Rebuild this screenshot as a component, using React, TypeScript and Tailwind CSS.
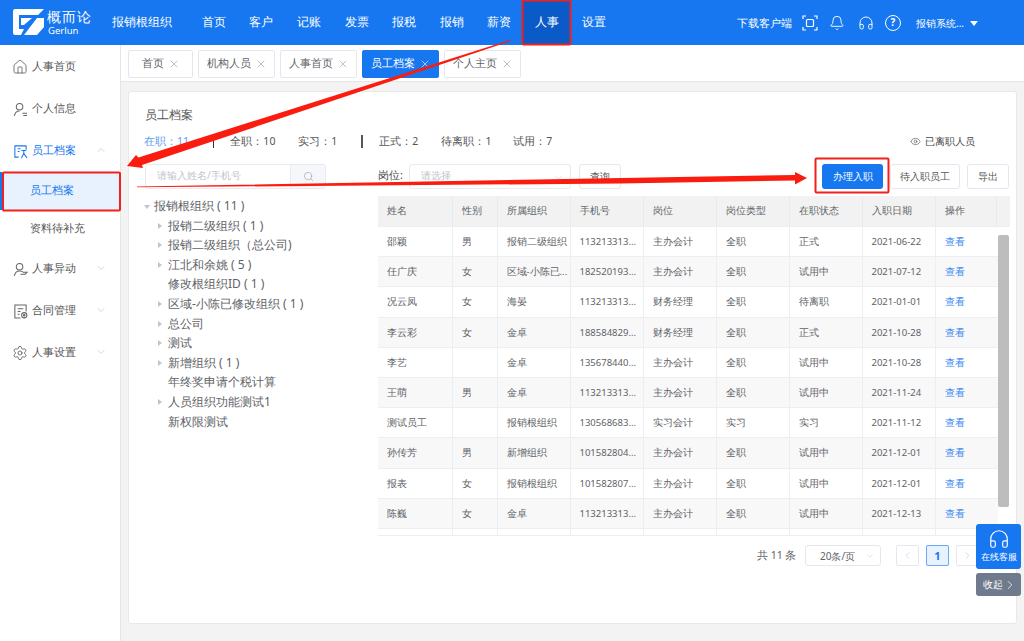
import React from "react";
import { Bell, ChevronDown, ChevronLeft, ChevronRight, ChevronUp, Eye, Headphones, Home, Search, Settings, X } from "lucide-react";

const nav: [string, number][] = [["首页", 214], ["客户", 261], ["记账", 309], ["发票", 357], ["报税", 404], ["报销", 452], ["薪资", 499], ["人事", 547], ["设置", 594]];
const tabs: [string, number, number][] = [["首页", 128, 65], ["机构人员", 198, 77], ["人事首页", 280, 77], ["员工档案", 362, 77], ["个人主页", 444, 77]];
const cols = [75, 45, 73, 73, 73, 73, 73, 73, 61];
const heads = ["姓名", "性别", "所属组织", "手机号", "岗位", "岗位类型", "在职状态", "入职日期", "操作"];
const rows = [
  ["邵颖", "男", "报销二级组织", "113213313...", "主办会计", "全职", "正式", "2021-06-22"],
  ["任广庆", "女", "区域-小陈已...", "182520193...", "主办会计", "全职", "试用中", "2021-07-12"],
  ["况云凤", "女", "海晏", "113213313...", "财务经理", "全职", "待离职", "2021-01-01"],
  ["李云彩", "女", "金卓", "188584829...", "财务经理", "全职", "正式", "2021-10-28"],
  ["李艺", "", "金卓", "135678440...", "主办会计", "全职", "试用中", "2021-10-28"],
  ["王萌", "男", "金卓", "113213313...", "主办会计", "全职", "试用中", "2021-11-24"],
  ["测试员工", "", "报销根组织", "130568683...", "实习会计", "实习", "实习", "2021-11-12"],
  ["孙传芳", "男", "新增组织", "101582804...", "主办会计", "全职", "试用中", "2021-12-01"],
  ["报表", "女", "报销根组织", "101582807...", "主办会计", "全职", "试用中", "2021-12-01"],
  ["陈巍", "女", "金卓", "113213313...", "主办会计", "全职", "试用中", "2021-12-13"],
  ["", "", "", "", "", "", "", ""],
];
const tree: [string, boolean][] = [["报销二级组织 ( 1 )", true], ["报销二级组织（总公司)", true], ["江北和余姚 ( 5 )", true], ["修改根组织ID ( 1 )", false], ["区域-小陈已修改组织 ( 1 )", true], ["总公司", true], ["测试", true], ["新增组织 ( 1 )", true], ["年终奖申请个税计算", false], ["人员组织功能测试1", true], ["新权限测试", false]];
const stats: [string, number][] = [["全职：10", 230], ["实习：1", 298], ["正式：2", 379], ["待离职：1", 441], ["试用：7", 513]];

function Tri() {
  return <span className="absolute left-[-10px] top-[7px] w-0 h-0 border-y-[3px] border-y-transparent border-l-[4px] border-l-[#c0c4cc]" />;
}

function SideItem({ y, label, icon, blue, chev }: { y: number; label: string; icon: React.ReactNode; blue?: boolean; chev?: "up" | "down" }) {
  return (
    <div className={`absolute left-0 w-[120px] h-[20px] flex items-center text-[10.5px] ${blue ? "text-[#1677f0]" : "text-[#555]"}`} style={{ top: y }}>
      <span className="absolute left-[11px] top-[1px] w-[18px] h-[18px] flex items-center justify-center">{icon}</span>
      <span className="absolute left-[32px]">{label}</span>
      {chev === "up" && <ChevronUp className="absolute left-[95px] top-[3px] text-[#b8bcc4]" size={12} strokeWidth={1.2} />}
      {chev === "down" && <ChevronDown className="absolute left-[95px] top-[3px] text-[#b8bcc4]" size={12} strokeWidth={1.2} />}
    </div>
  );
}

export default function App() {
  return (
    <div className="relative w-[1024px] h-[641px] overflow-hidden bg-[#f3f3f3] text-[#606266] font-['Noto_Sans_CJK_SC','Noto_Sans',sans-serif]">
      {/* Header */}
      <header className="absolute inset-x-0 top-0 h-[45px] bg-[#1677f0] text-white">
        <svg className="absolute left-[13px] top-[9px]" width="31" height="26" viewBox="0 0 31 26" fill="#fff">
          <path d="M2 0H31L25 6H6V20H11L8 26H2Q0 26 0 24V2Q0 0 2 0Z" />
          <path d="M8 9H19L11 16H8Z" />
          <path d="M24 9H31V18L24 26H11Z" />
        </svg>
        <span className="absolute left-[47px] top-[8px] text-[14px] leading-[18px] font-light tracking-[1px]">概而论</span>
        <span className="absolute left-[48px] top-[25px] text-[9.5px] leading-[12px]">Gerlun</span>
        <span className="absolute left-[112px] top-[13px] text-[12px] leading-[18px]">报销根组织</span>
        <div className="absolute left-[522px] top-0 w-[49px] h-[45px] bg-[#0a5bc8]" />
        {nav.map(([t, x]) => (
          <span key={t} className="absolute top-[13px] text-[12px] leading-[18px] -translate-x-1/2" style={{ left: x }}>{t}</span>
        ))}
        <span className="absolute left-[737px] top-[15px] text-[10.5px] leading-[16px]">下载客户端</span>
        <svg className="absolute left-[802px] top-[15px]" width="16" height="16" viewBox="0 0 16 16" fill="none" stroke="#fff" strokeWidth="1.2">
          <path d="M4 1H1V4M12 1H15V4M4 15H1V12M12 15H15V12" />
          <rect x="4.5" y="4.5" width="7" height="7" rx="1" />
        </svg>
        <Bell className="absolute left-[829px] top-[15px]" size={16} strokeWidth={1.4} />
        <Headphones className="absolute left-[858px] top-[15px]" size={16} strokeWidth={1.4} />
        <span className="absolute left-[885px] top-[15px] w-[16px] h-[16px] rounded-full border-[1.4px] border-white text-[10px] leading-[13px] text-center font-bold">?</span>
        <span className="absolute left-[916px] top-[15px] text-[10px] leading-[16px]">报销系统...</span>
        <span className="absolute left-[970px] top-[21px] w-0 h-0 border-x-[4px] border-x-transparent border-t-[5px] border-t-white" />
      </header>

      {/* Sidebar */}
      <aside className="absolute left-0 top-[45px] bottom-0 w-[121px] bg-white border-r border-[#e6e6e6]" />
      <div className="absolute left-0 top-0">
        <SideItem y={57} label="人事首页" icon={<Home size={16} strokeWidth={1.2} />} />
        <SideItem y={99} label="个人信息" icon={
          <svg width="15" height="15" viewBox="0 0 16 16" fill="none" stroke="#666" strokeWidth="1.1"><circle cx="7" cy="5" r="3.5" /><path d="M1.5 15Q2 9.5 7 9.5M10 12H15M11 14.5H15" /></svg>
        } />
        <SideItem y={141} blue chev="up" label="员工档案" icon={
          <svg width="15" height="15" viewBox="0 0 16 16" fill="none" stroke="#1677f0" strokeWidth="1.1"><path d="M14 6V2H2V14H6" /><path d="M5 5H8M5 8H7M9 7H14M11.5 7V10L9 15M11.5 10L15 15" /></svg>
        } />
        <div className="absolute left-[2px] top-[172px] w-[118px] h-[38px] bg-[#e8f2fe] flex items-center text-[10.5px] text-[#1677f0] whitespace-nowrap">
          <span className="ml-[28px]">员工档案</span>
        </div>
        <div className="absolute left-0 top-[172px] w-[2px] h-[38px] bg-[#1677f0]" />
        <span className="absolute left-[30px] top-[220px] text-[10.5px] leading-[17px] text-[#555] whitespace-nowrap">资料待补充</span>
        <SideItem y={259} chev="down" label="人事异动" icon={
          <svg width="15" height="15" viewBox="0 0 16 16" fill="none" stroke="#666" strokeWidth="1.1"><circle cx="7" cy="5" r="3.5" /><path d="M1.5 15Q2 9.5 7 9.5Q10 9.5 11 11H15L13 13H8" /></svg>
        } />
        <SideItem y={301} chev="down" label="合同管理" icon={
          <svg width="15" height="15" viewBox="0 0 16 16" fill="none" stroke="#666" strokeWidth="1.1"><path d="M8 15H2V1H14V8" /><path d="M5 5H11M5 8H8M5 11H7" /><circle cx="12" cy="12" r="2.8" /><circle cx="12" cy="12" r="0.8" fill="#666" /></svg>
        } />
        <SideItem y={343} chev="down" label="人事设置" icon={<Settings size={16} strokeWidth={1.2} />} />
      </div>

      {/* Tabs bar */}
      <div className="absolute left-[121px] right-0 top-[45px] h-[37px] bg-white border-b border-[#e6e6e6]" />
      {tabs.map(([t, x, w], i) => (
        <div key={t} className={`absolute top-[50px] h-[28px] rounded-[2px] border flex items-center justify-center gap-[4px] text-[10.5px] whitespace-nowrap ${i === 3 ? "bg-[#1677f0] border-[#1677f0] text-white" : "bg-white border-[#e4e7ed] text-[#606266]"}`} style={{ left: x, width: w }}>
          <span>{t}</span>
          <X size={12} strokeWidth={1.2} className={i === 3 ? "text-white" : "text-[#909399]"} />
        </div>
      ))}

      {/* Card */}
      <main className="absolute left-[128px] top-[91px] w-[889px] h-[533px] bg-white rounded-[3px] border border-[#e8e8e8]" />
      <span className="absolute left-[145px] top-[106px] text-[12px] leading-[18px] text-[#555]">员工档案</span>
      <span className="absolute left-[144px] top-[133px] text-[10.5px] leading-[17px] text-[#5b9bf3]">在职：11</span>
      <div className="absolute left-[213px] top-[136px] w-[1px] h-[12px] bg-[#333]" />
      <div className="absolute left-[361px] top-[135px] w-[1.5px] h-[13px] bg-[#555]" />
      {stats.map(([t, x]) => (
        <span key={t} className="absolute top-[133px] text-[10.5px] leading-[17px] text-[#555] tracking-[0.1px]" style={{ left: x }}>{t}</span>
      ))}
      <Eye className="absolute left-[910px] top-[136px] text-[#555]" size={11} strokeWidth={1.4} />
      <span className="absolute left-[925px] top-[133px] text-[10.2px] leading-[17px] text-[#444] whitespace-nowrap">已离职人员</span>

      {/* Search */}
      <div className="absolute left-[145px] top-[164px] w-[181px] h-[25px] rounded-[3px] border border-[#e8eaee] flex overflow-hidden">
        <span className="flex-1 pl-[11px] text-[10px] leading-[21px] text-[#c0c4cc] whitespace-nowrap">请输入姓名/手机号</span>
        <span className="w-[35px] bg-[#f5f7fa] border-l border-[#e8eaee] flex items-center justify-center text-[#909399]"><Search size={11} strokeWidth={1.2} /></span>
      </div>
      <span className="absolute left-[378px] top-[167px] text-[10.5px] leading-[17px] text-[#444] whitespace-nowrap">岗位:</span>
      <div className="absolute left-[409px] top-[164px] w-[162px] h-[25px] rounded-[3px] border border-[#e8eaee]">
        <span className="absolute left-[11px] top-[2px] text-[10px] leading-[17px] text-[#c0c4cc]">请选择</span>
        <ChevronDown className="absolute left-[143px] top-[7px] text-[#c0c4cc]" size={11} strokeWidth={1.2} />
      </div>
      <div className="absolute left-[579px] top-[164px] w-[42px] h-[25px] rounded-[3px] border border-[#e4e7ed] text-[9.5px] leading-[23px] text-center text-[#555]">查询</div>
      <div className="absolute left-[822px] top-[164px] w-[61px] h-[25px] rounded-[3px] bg-[#1677f0] text-white text-[9.5px] leading-[25px] text-center">办理入职</div>
      <div className="absolute left-[890px] top-[164px] w-[70px] h-[25px] rounded-[3px] border border-[#e4e7ed] bg-white text-[9.5px] leading-[23px] text-center text-[#555]">待入职员工</div>
      <div className="absolute left-[967px] top-[164px] w-[42px] h-[25px] rounded-[3px] border border-[#e4e7ed] bg-white text-[9.5px] leading-[23px] text-center text-[#555]">导出</div>

      {/* Tree */}
      <div className="absolute left-[154px] top-[196px] text-[12px] leading-[19.6px] text-[#606266] whitespace-nowrap">
        <span className="absolute left-[-10px] top-[9px] w-0 h-0 border-x-[3px] border-x-transparent border-t-[4px] border-t-[#c0c4cc]" />
        <div>报销根组织 ( 11 )</div>
        <div className="pl-[14px]">
          {tree.map(([t, arrow]) => (
            <div key={t} className="relative">
              {arrow && <Tri />}
              {t}
            </div>
          ))}
        </div>
      </div>

      {/* Table */}
      <div className="absolute left-[378px] top-[196px] w-[632px] h-[339px] overflow-hidden text-[9.5px]">
        <div className="flex h-[31px] bg-[#f2f2f2] border-b border-[#eceef2]">
          {heads.map((h, i) => (
            <div key={h} className="pl-[8.5px] leading-[30px] border-r border-[#e8eaee] text-[#606266] shrink-0" style={{ width: cols[i] }}>{h}</div>
          ))}
          <div className="flex-1" />
        </div>
        {rows.map((r, ri) => (
          <div key={ri} className={`flex h-[30.2px] border-b border-[#eceef2] ${ri % 2 === 1 ? "bg-[#f8f8f9]" : "bg-white"}`}>
            {r.map((c, i) => (
              <div key={i} className="pl-[8.5px] leading-[29px] border-r border-[#eceef2] whitespace-nowrap shrink-0" style={{ width: cols[i] }}>{c}</div>
            ))}
            <div className="pl-[8.5px] leading-[29px] text-[#3d8bf2] shrink-0" style={{ width: cols[8] }}>{ri < 10 ? "查看" : ""}</div>
          </div>
        ))}
        <div className="absolute left-[620px] top-[31px] bottom-0 w-[12px] bg-white" />
        <div className="absolute left-[620px] top-[39px] w-[11px] h-[272px] rounded-[2px] bg-[#bdbdbd]" />
      </div>
      <div className="absolute left-[378px] top-[535px] w-[632px] h-[1px] bg-[#eceef2]" />

      {/* Pagination */}
      <span className="absolute left-[757px] top-[546px] text-[10.5px] leading-[18px] text-[#606266]">共 11 条</span>
      <div className="absolute left-[805px] top-[545px] w-[76px] h-[21px] rounded-[3px] border border-[#e4e7ed] bg-white">
        <span className="absolute left-[14px] top-[1px] text-[10px] leading-[18px] whitespace-nowrap">20条/页</span>
        <ChevronDown className="absolute left-[59px] top-[5px] text-[#c0c4cc]" size={10} strokeWidth={1.2} />
      </div>
      <div className="absolute left-[896px] top-[545px] w-[23px] h-[21px] rounded-[2px] border border-[#e4e7ed] bg-white flex items-center justify-center text-[#c0c4cc]"><ChevronLeft size={11} strokeWidth={1.4} /></div>
      <div className="absolute left-[926px] top-[545px] w-[23px] h-[21px] rounded-[2px] border border-[#1677f0]/60 bg-[#e8f2fe] text-[#1677f0] text-[11px] font-bold leading-[20px] text-center">1</div>
      <div className="absolute left-[956px] top-[545px] w-[23px] h-[21px] rounded-[2px] border border-[#e4e7ed] bg-white flex items-center justify-center text-[#c0c4cc]"><ChevronRight size={11} strokeWidth={1.4} /></div>

      {/* Online service */}
      <div className="absolute left-[976px] top-[524px] w-[45px] h-[45px] rounded-[3px] bg-[#1677f0] text-white flex flex-col items-center">
        <Headphones className="mt-[4px]" size={22} strokeWidth={1.3} />
        <span className="text-[9.2px] leading-[14px] whitespace-nowrap">在线客服</span>
      </div>
      <div className="absolute left-[976px] top-[573px] w-[45px] h-[23px] rounded-[3px] bg-[#6f7a8c] text-white flex items-center pl-[7px]">
        <span className="text-[9.5px] leading-[14px] whitespace-nowrap">收起</span>
        <ChevronRight size={14} strokeWidth={1.3} />
      </div>

      {/* Annotations */}
      <svg className="absolute left-0 top-0 pointer-events-none" width="1024" height="641" viewBox="0 0 1024 641">
        <rect x="522.5" y="0.5" width="48" height="44" rx="1" fill="none" stroke="#f0201c" strokeWidth="2" />
        <rect x="3" y="172.5" width="117" height="38" rx="1" fill="none" stroke="#f0201c" strokeWidth="2" />
        <rect x="815.5" y="158.5" width="73" height="34" rx="1" fill="none" stroke="#f0201c" strokeWidth="2" />
        <polygon points="127,166 136,155 138.5,157.5 510,40 510.5,41 142,165 143,168" fill="#fb1c10" />
        <polygon points="137,186.5 795,175 795,172 807,178 795,184.5 795,180.5 620,183.5 137,187.3" fill="#fb1c10" />
      </svg>
    </div>
  );
}
